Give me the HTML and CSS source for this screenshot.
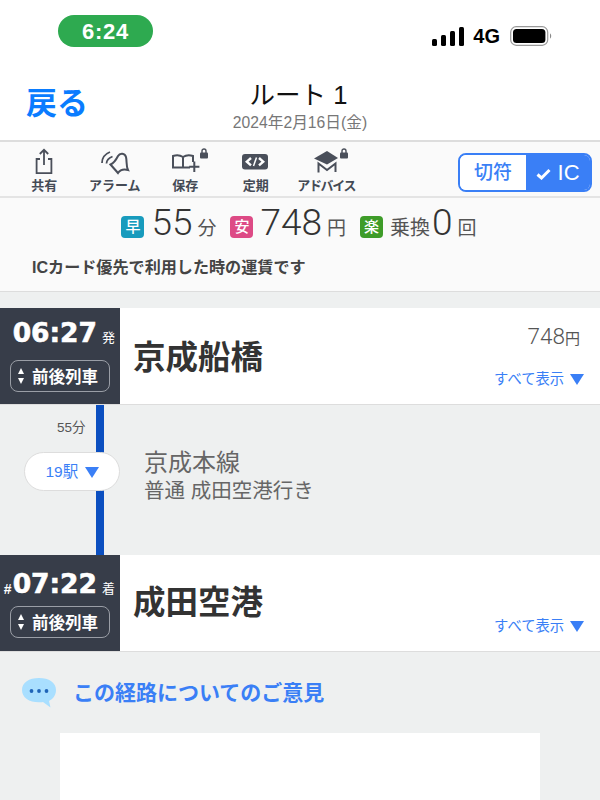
FILE: index.html
```html
<!DOCTYPE html>
<html lang="ja">
<head>
    <meta charset="UTF-8">
    <title>ルート 1</title>
    <link rel="stylesheet" href="styles.css">
</head>
<body>
    <div class="status-bar">
        <div class="clock">6:24</div>
        <div class="status-right">
            <svg class="signal" width="32" height="19" viewBox="0 0 32 19">
                <rect x="0" y="12" width="5" height="7" rx="1.5"/>
                <rect x="9" y="8" width="5" height="11" rx="1.5"/>
                <rect x="18" y="4" width="5" height="15" rx="1.5"/>
                <rect x="27" y="0" width="5" height="19" rx="1.5"/>
            </svg>
            <span class="network">4G</span>
            <svg class="battery" width="43" height="20" viewBox="0 0 43 20">
                <rect x="0.7" y="0.7" width="37" height="18.6" rx="5.5" fill="none" stroke="#999" stroke-width="1.2"/>
                <rect x="3" y="3" width="32.4" height="14" rx="3.5" fill="#000"/>
                <path d="M40 7.5c1.6.5 1.6 4.5 0 5z" fill="#888"/>
            </svg>
        </div>
    </div>

    <div class="nav-bar">
        <div class="back">戻る</div>
        <div class="nav-title">
            <h1>ルート 1</h1>
            <div class="nav-date">2024年2月16日(金)</div>
        </div>
    </div>

    <div class="toolbar">
        <div class="tools">
            <div class="tool">
                <svg width="60" height="28" viewBox="0 0 60 28" class="tool-icon">
                    <path d="M26 11H22.6V25.2H37.4V11H34"/>
                    <path d="M30 17V2M25.8 6L30 1.8L34.2 6"/>
                </svg>
                <span>共有</span>
            </div>
            <div class="tool">
                <svg width="60" height="28" viewBox="0 0 60 28" class="tool-icon">
                    <path class="thick" d="M25.5 16.5C29 15 31 12 33 8C35 4.5 40 5 41 9C42 13 41 18 43 22C39 21 35 22 33 25Z"/>
                    <path d="M17 15C17 10 20 6 25 4M21.5 15.5C21.5 12.5 24 10 27.5 8.5"/>
                </svg>
                <span>アラーム</span>
            </div>
            <div class="tool">
                <svg width="60" height="28" viewBox="0 0 60 28" class="tool-icon">
                    <path class="thick" d="M28 9C25 7 21 7 18 8V19.5H35M28 9C31 7 35 7 38 8V14M28 9V19.5"/>
                    <path class="thick" d="M39.3 13.5V24M34.2 18.7H44.4"/>
                    <rect class="lock" x="45" y="4.5" width="8" height="6" rx="1"/>
                    <path class="shackle" d="M47 5V3A2 2 0 0 1 51 3V5"/>
                </svg>
                <span>保存</span>
            </div>
            <div class="tool">
                <svg width="60" height="28" viewBox="0 0 60 28" class="tool-icon">
                    <rect class="solid" x="16" y="6" width="26" height="15.5" rx="3"/>
                    <path class="cut" d="M25 10L20.8 13.7L25 17.4M33 10L37.2 13.7L33 17.4"/>
                    <path class="cut-thin" d="M30.5 9.5L27.5 18"/>
                </svg>
                <span>定期</span>
            </div>
            <div class="tool">
                <svg width="60" height="28" viewBox="0 0 60 28" class="tool-icon">
                    <path class="solid" d="M31 3L42 10L31 16.5L18 10.5Z"/>
                    <path class="thick" d="M22.5 24.5V15.5L31 22L39.5 15.5V24"/>
                    <rect class="lock" x="44" y="4.5" width="8" height="6" rx="1"/>
                    <path class="shackle" d="M46 5V3A2 2 0 0 1 50 3V5"/>
                </svg>
                <span class="tight">アドバイス</span>
            </div>
        </div>
        <div class="fare-toggle">
            <div class="toggle-off">切符</div>
            <div class="toggle-on">
                <svg width="15" height="12" viewBox="0 0 15 12"><path d="M1.5 6.5L5.5 10L13.5 2" fill="none" stroke="#fff" stroke-width="3"/></svg>
                IC
            </div>
        </div>
    </div>

    <div class="summary">
        <div class="summary-row">
            <span class="tag tag-fast">早</span>
            <span class="big">55</span><span class="unit unit-fast">分</span>
            <span class="tag tag-cheap">安</span>
            <span class="big">748</span><span class="unit unit-cheap">円</span>
            <span class="tag tag-easy">楽</span>
            <span class="unit unit-transfer">乗換</span><span class="big">0</span><span class="unit">回</span>
        </div>
        <p class="summary-note">ICカード優先で利用した時の運賃です</p>
    </div>

    <div class="route">
        <div class="station">
            <div class="time-box">
                <div class="time"><b>06:27</b><small>発</small></div>
                <div class="near-trains"><span class="updown"><i></i><i class="down"></i></span>前後列車</div>
            </div>
            <div class="station-name">京成船橋</div>
            <div class="station-side">
                <div class="fare">748<small>円</small></div>
                <div class="show-all">すべて表示 <span class="arrow"></span></div>
            </div>
        </div>

        <div class="ride">
            <div class="ride-left">
                <div class="duration">55分</div>
                <div class="stops">19駅 <span class="arrow"></span></div>
            </div>
            <div class="ride-info">
                <div class="line-name">京成本線</div>
                <div class="line-dest">普通 成田空港行き</div>
            </div>
        </div>

        <div class="station arrival">
            <div class="time-box">
                <div class="time"><em>#</em><b>07:22</b><small>着</small></div>
                <div class="near-trains"><span class="updown"><i></i><i class="down"></i></span>前後列車</div>
            </div>
            <div class="station-name">成田空港</div>
            <div class="station-side">
                <div class="fare"></div>
                <div class="show-all">すべて表示 <span class="arrow"></span></div>
            </div>
        </div>
    </div>

    <div class="feedback">
        <svg width="34" height="30" viewBox="0 0 34 30">
            <path d="M17 0C27 0 34 4.5 34 12C34 18 30 21.5 27 23L28.5 29.5L21 24C19 24.3 18 24.3 17 24.3C7 24.3 0 19.5 0 12C0 4.5 7 0 17 0Z" fill="#a9dfff"/>
            <circle cx="9.5" cy="13" r="1.9" fill="#1f64b8"/>
            <circle cx="17" cy="13" r="1.9" fill="#1f64b8"/>
            <circle cx="24.5" cy="13" r="1.9" fill="#1f64b8"/>
        </svg>
        <span>この経路についてのご意見</span>
    </div>
    <div class="feedback-card"></div>
</body>
</html>
```

FILE: styles.css
```css
* {
    margin: 0;
    padding: 0;
    box-sizing: border-box;
}

html,
body {
    height: 800px;
    overflow: hidden;
}

body {
    width: 600px;
    background: #eef0f0;
    color: #333;
    font-family: "Liberation Sans", "Noto Sans CJK JP", sans-serif;
}

/* Status bar */
.status-bar {
    height: 70px;
    background: #fff;
    padding: 15px 47px 0 58px;
    display: flex;
    justify-content: space-between;
    align-items: flex-start;
}

.clock {
    width: 95px;
    height: 32px;
    border-radius: 16px;
    background: #2eaa50;
    color: #fff;
    font-size: 22px;
    font-weight: bold;
    line-height: 33px;
    text-align: center;
    letter-spacing: 0.7px;
}

.status-right {
    display: flex;
    align-items: center;
    margin-top: 11px;
}

.signal {
    fill: #000;
    margin-right: 9px;
}

.network {
    font-size: 20px;
    font-weight: bold;
    color: #000;
    margin-right: 10px;
    line-height: 20px;
}

/* Nav bar */
.nav-bar {
    height: 72px;
    background: #fff;
    border-bottom: 2px solid #ddd;
    display: flex;
    position: relative;
    padding-left: 26px;
}

.back {
    color: #0a7cff;
    font-size: 31px;
    font-weight: bold;
    line-height: 68px;
}

.nav-title {
    position: absolute;
    left: 0;
    right: 0;
    top: 8px;
    text-align: center;
}

.nav-title h1 {
    font-size: 25.5px;
    font-weight: normal;
    color: #111;
    line-height: 34px;
    padding-right: 3px;
}

.nav-date {
    font-size: 15.7px;
    color: #777;
    line-height: 20px;
    margin-top: 1px;
}

/* Toolbar */
.toolbar {
    height: 56px;
    background: #fafafa;
    border-bottom: 2px solid #e4e4e4;
    padding: 6px 8px 0 9px;
    display: flex;
    justify-content: space-between;
}

.tools {
    display: grid;
    grid-template-columns: repeat(5, 70.5px);
}

.tool {
    display: flex;
    flex-direction: column;
    align-items: center;
}

.tool span {
    font-size: 13px;
    font-weight: bold;
    color: #444a55;
    line-height: 18px;
    margin-top: 1px;
    white-space: nowrap;
}

.tool span.tight {
    letter-spacing: -1.3px;
}

.tool-icon {
    fill: none;
    stroke: #4a4f5a;
    stroke-width: 1.8;
}

.tool-icon .thick {
    stroke-width: 2;
}

.tool-icon .lock,
.tool-icon .solid {
    fill: #4a4f5a;
    stroke: none;
}

.tool-icon .shackle {
    stroke-width: 1.4;
}

.tool-icon .cut {
    stroke: #fff;
    stroke-width: 2.4;
}

.tool-icon .cut-thin {
    stroke: #fff;
    stroke-width: 1.5;
}

.fare-toggle {
    width: 134px;
    height: 39px;
    margin-top: 5px;
    border: 2px solid #3a7ff6;
    border-radius: 8px;
    display: flex;
    overflow: hidden;
    font-size: 19px;
    font-weight: 500;
    line-height: 35px;
    text-align: center;
}

.toggle-off {
    width: 66px;
    background: #fff;
    color: #3a7ff6;
}

.toggle-on {
    flex: 1;
    background: #3a7ff6;
    color: #fff;
    font-size: 22px;
}

/* Summary */
.summary {
    height: 94px;
    background: #fafafa;
    border-bottom: 1px solid #ddd;
    padding-top: 5px;
}

.summary-row {
    display: flex;
    align-items: center;
    justify-content: center;
    height: 40px;
    color: #555;
    padding-right: 2px;
}

.tag {
    width: 23px;
    height: 22px;
    border-radius: 4px;
    color: #fff;
    font-size: 15px;
    font-weight: 500;
    line-height: 22px;
    text-align: center;
    margin: 8px 7px 0 0;
}

.tag-fast {
    background: #189bbd;
}

.tag-cheap {
    background: #dd4a85;
}

.tag-easy {
    background: #3e9c29;
}

.big {
    font-family: Roboto, "Liberation Sans", sans-serif;
    font-weight: 300;
    font-size: 37px;
    color: #333;
    line-height: 40px;
}

.unit {
    font-size: 19px;
    margin: 6px 0 0 5px;
}

.unit-fast {
    margin-right: 14px;
}

.unit-cheap {
    margin-right: 14px;
}

.unit-transfer {
    font-size: 20px;
    margin: 6px 2px 0 0;
}

.summary-note {
    font-size: 16.1px;
    font-weight: bold;
    color: #444;
    line-height: 22px;
    padding-left: 32px;
    margin-top: 13px;
}

/* Route */
.route {
    margin-top: 16px;
}

.station {
    height: 97px;
    background: #fff;
    border-bottom: 1px solid #ddd;
    display: flex;
}

.time-box {
    width: 120px;
    height: 96px;
    background: #373d49;
    color: #fff;
    padding-top: 10px;
    flex-shrink: 0;
}

.arrival .time-box {
    padding-top: 14px;
}

.time {
    display: flex;
    align-items: flex-end;
    justify-content: flex-end;
    padding-right: 5px;
    height: 30px;
}

.time b {
    font-family: "DejaVu Sans", sans-serif;
    font-size: 26.5px;
    line-height: 30px;
    -webkit-text-stroke: 0.6px #fff;
}

.time small {
    font-size: 13px;
    margin-left: 5px;
    line-height: 20px;
}

.time em {
    font-style: normal;
    font-weight: bold;
    font-size: 14px;
    line-height: 20px;
    margin-right: 1px;
}

.near-trains {
    width: 100px;
    height: 32px;
    margin: 12px 0 0 10px;
    border: 1px solid #9a9ea6;
    border-radius: 8px;
    display: flex;
    align-items: center;
    gap: 8px;
    padding-left: 7px;
    font-size: 16.5px;
    font-weight: bold;
}

.arrival .near-trains {
    margin-top: 7px;
}

.updown {
    display: flex;
    flex-direction: column;
    gap: 4px;
}

.updown i {
    width: 0;
    height: 0;
    border: 3.5px solid transparent;
    border-top: 0;
    border-bottom: 6px solid #fff;
}

.updown i.down {
    border-bottom: 0;
    border-top: 6px solid #fff;
}

.station-name {
    font-size: 32.5px;
    font-weight: bold;
    color: #333;
    padding: 29px 0 0 13px;
    line-height: 42px;
    flex: 1;
}

.arrival .station-name {
    padding-top: 27px;
}

.station-side {
    width: 200px;
    padding: 12px 16px 0 0;
    text-align: right;
}

.fare {
    height: 30px;
    font-family: Roboto, "Noto Sans CJK JP", sans-serif;
    font-size: 22.5px;
    font-weight: 300;
    color: #555;
    line-height: 32px;
    padding-right: 4px;
}

.fare small {
    font-size: 15px;
    font-weight: 400;
}

.show-all {
    margin-top: 19px;
    font-size: 14.3px;
    color: #3a7ff6;
    line-height: 20px;
}

.arrow {
    display: inline-block;
    width: 0;
    height: 0;
    margin-left: 2px;
    vertical-align: -1px;
    border-left: 7px solid transparent;
    border-right: 7px solid transparent;
    border-top: 11px solid #3a7ff6;
}

.ride {
    height: 150px;
    display: flex;
    background: linear-gradient(#0b4fc0, #0b4fc0) 96px 0 / 8px 100% no-repeat;
}

.ride-left {
    width: 120px;
    padding: 13px 0 0 24px;
    flex-shrink: 0;
}

.duration {
    font-size: 13.5px;
    color: #555;
    line-height: 20px;
    padding-left: 33px;
}

.stops {
    width: 96px;
    height: 39px;
    margin-top: 14px;
    background: #fff;
    border: 1px solid #ddd;
    border-radius: 20px;
    color: #3a7ff6;
    font-size: 15.5px;
    line-height: 37px;
    text-align: center;
}

.ride-info {
    padding: 42px 0 0 24px;
    color: #666;
}

.line-name {
    font-size: 24px;
    line-height: 32px;
}

.line-dest {
    font-size: 20.5px;
    line-height: 24px;
}

/* Feedback */
.feedback {
    height: 81px;
    padding: 26px 0 0 22px;
    display: flex;
    align-items: flex-start;
    gap: 17px;
    color: #3a7ff6;
    font-size: 21px;
    font-weight: bold;
    line-height: 30px;
}

.feedback-card {
    width: 480px;
    height: 67px;
    margin-left: 60px;
    background: #fff;
}
```
